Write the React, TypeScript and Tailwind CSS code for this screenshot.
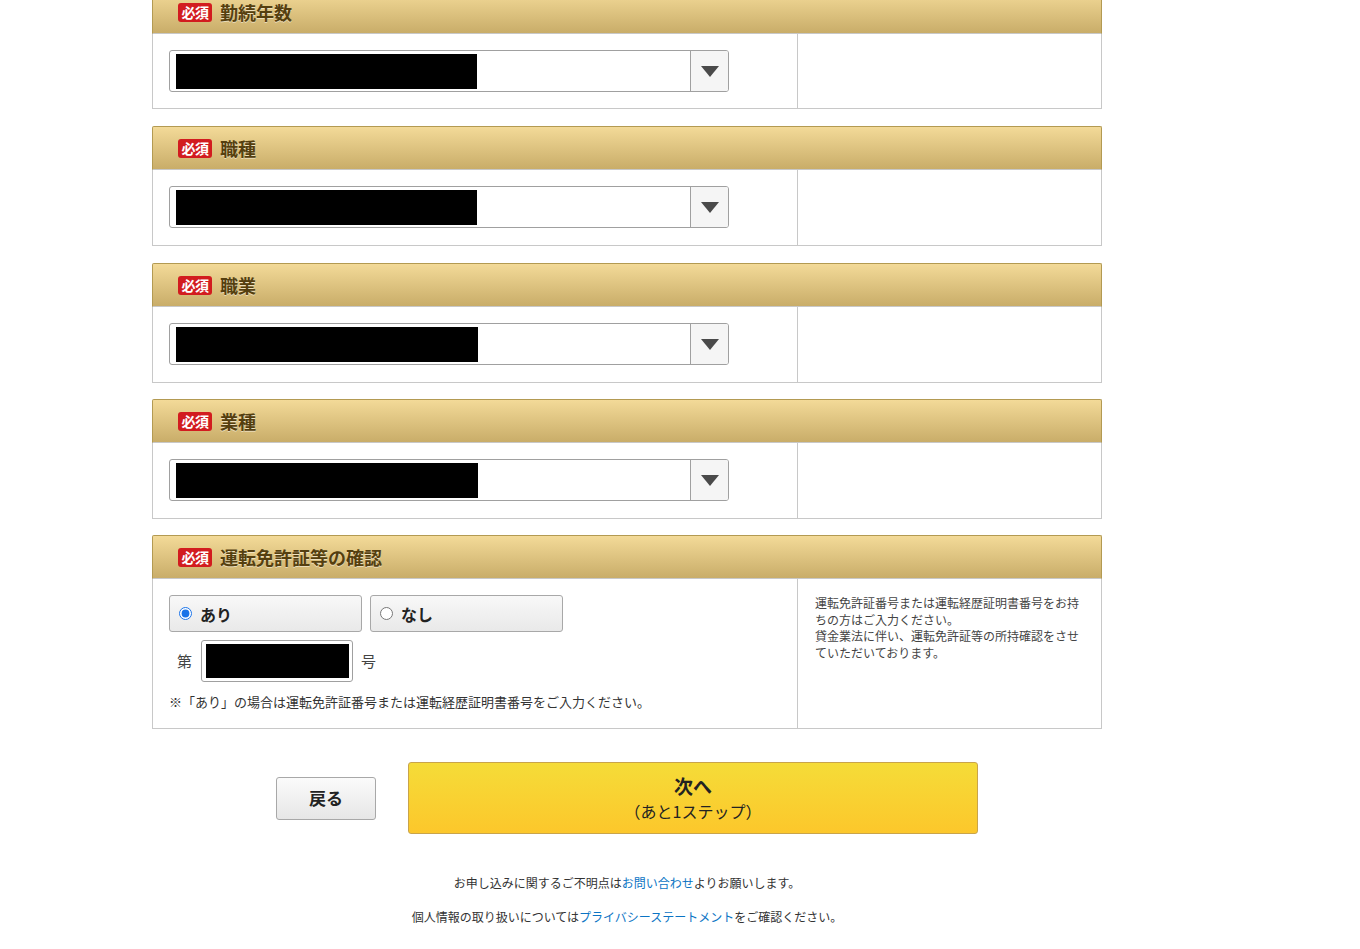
import React from "react";

const font = { fontFamily: '"Noto Sans CJK JP", "Noto Sans", sans-serif' };

function Header({ title }: { title: string }) {
  return (
    <div className="h-[44px] flex items-center pl-[25px] border border-[#b39a52] border-b-[#c8c8c8] rounded-t-[2px] bg-gradient-to-b from-[#f3da98] to-[#c9ad69]">
      <span className="inline-flex items-center justify-center h-[19px] w-[34px] rounded-[3px] bg-[#d21c1f] text-white text-[14px] font-bold leading-none tracking-[-0.5px]">
        必須
      </span>
      <span className="ml-[8px] text-[18px] font-bold text-[#553f0f] leading-none [text-shadow:0_1px_0_rgba(255,255,255,0.5)]">
        {title}
      </span>
    </div>
  );
}

function Select({ w }: { w: number }) {
  return (
    <div className="h-[42px] w-[560px] flex border border-[#a0a0a0] rounded-[3px] bg-white overflow-hidden">
      <div className="flex-1 flex items-center pl-[6px]">
        <div className="h-[35px] bg-black" style={{ width: w }} />
      </div>
      <div className="w-[38px] border-l border-[#a0a0a0] bg-[#f5f5f5] flex items-center justify-center">
        <svg width="18" height="11" viewBox="0 0 18 11">
          <path d="M0 0 H18 L9 11 Z" fill="#4a4a4a" />
        </svg>
      </div>
    </div>
  );
}

function SelectSection({ title, w, mt, h }: { title: string; w: number; mt: string; h: string }) {
  return (
    <div className={mt}>
      <Header title={title} />
      <div className={"flex border-x border-b border-[#c8c8c8] " + h}>
        <div className="w-[645px] border-r border-[#c8c8c8] pl-[16px] pt-[16px]">
          <Select w={w} />
        </div>
        <div className="flex-1" />
      </div>
    </div>
  );
}

export default function App() {
  return (
    <div className="bg-white min-h-[949px] text-[#333]" style={font}>
      <div className="w-[950px] ml-[152px] mt-[-10px]">
        <SelectSection title="勤続年数" w={301} mt="" h="h-[75px]" />
        <SelectSection title="職種" w={301} mt="mt-[17px]" h="h-[76px]" />
        <SelectSection title="職業" w={302} mt="mt-[17px]" h="h-[76px]" />
        <SelectSection title="業種" w={302} mt="mt-[16px]" h="h-[76px]" />

        <div className="mt-[16px]">
          <Header title="運転免許証等の確認" />
          <div className="flex border-x border-b border-[#c8c8c8] h-[150px]">
            <div className="w-[645px] border-r border-[#c8c8c8] pl-[16px] pt-[16px]">
              <div className="flex gap-[8px]">
                <label className="w-[193px] h-[37px] flex items-center pl-[9px] border border-[#a8a8a8] rounded-[3px] bg-gradient-to-b from-[#f8f8f8] to-[#e9e9e9]">
                  <input type="radio" name="lic" defaultChecked className="w-[13px] h-[13px] m-0 accent-[#1a73e8]" />
                  <span className="ml-[8px] text-[16px] font-bold text-[#222]">あり</span>
                </label>
                <label className="w-[193px] h-[37px] flex items-center pl-[9px] border border-[#a8a8a8] rounded-[3px] bg-gradient-to-b from-[#f8f8f8] to-[#e9e9e9]">
                  <input type="radio" name="lic" className="w-[13px] h-[13px] m-0" />
                  <span className="ml-[8px] text-[16px] font-bold text-[#222]">なし</span>
                </label>
              </div>
              <div className="flex items-center mt-[8px]">
                <span className="ml-[8px] text-[15px] text-[#444]">第</span>
                <div className="ml-[9px] w-[152px] h-[42px] border border-[#a0a0a0] rounded-[3px] p-[3px] pl-[4px]">
                  <div className="w-full h-full bg-black" />
                </div>
                <span className="ml-[8px] text-[15px] text-[#444]">号</span>
              </div>
              <div className="mt-[11px] text-[13px] text-[#333] leading-[18px]">
                ※「あり」の場合は運転免許証番号または運転経歴証明書番号をご入力ください。
              </div>
            </div>
            <div className="flex-1 pl-[17px] pr-[16px] pt-[16px] text-[12px] leading-[16.7px] text-[#444]">
              運転免許証番号または運転経歴証明書番号をお持ちの方はご入力ください。
              <br />
              貸金業法に伴い、運転免許証等の所持確認をさせていただいております。
            </div>
          </div>
        </div>

        <div className="flex justify-center items-center gap-[32px] mt-[33px]">
          <button className="w-[100px] h-[43px] border border-[#a8a8a8] rounded-[3px] bg-gradient-to-b from-[#fbfbfb] to-[#e6e6e6] text-[17px] font-bold text-[#222]">
            戻る
          </button>
          <button className="w-[570px] h-[72px] border border-[#c9a44a] rounded-[3px] bg-gradient-to-b from-[#f5dc38] to-[#fcc72b] flex flex-col items-center justify-center text-[#222]">
            <span className="text-[19px] font-bold leading-[24px]">次へ</span>
            <span className="text-[16px] leading-[22px] mt-[2px]">（あと1ステップ）</span>
          </button>
        </div>

        <div className="mt-[40px] text-center text-[12px] text-[#333] leading-[18px]">
          お申し込みに関するご不明点は<a className="text-[#0b74c4]">お問い合わせ</a>よりお願いします。
        </div>
        <div className="mt-[16px] text-center text-[12px] text-[#333] leading-[18px]">
          個人情報の取り扱いについては<a className="text-[#0b74c4]">プライバシーステートメント</a>をご確認ください。
        </div>
      </div>
    </div>
  );
}
